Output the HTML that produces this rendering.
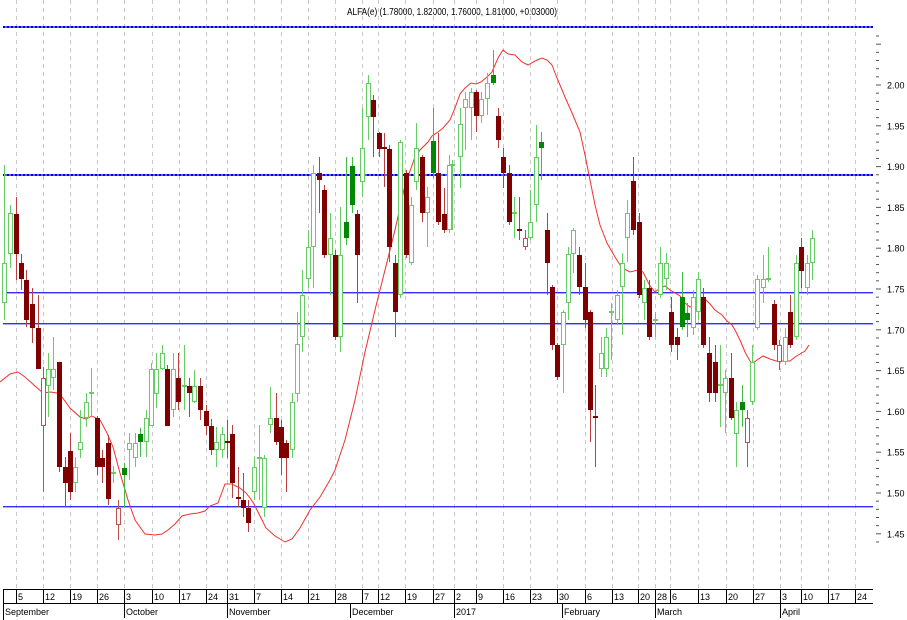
<!DOCTYPE html>
<html><head><meta charset="utf-8"><style>
html,body{margin:0;padding:0;background:#fff;width:907px;height:620px;overflow:hidden}
svg{display:block}
text{font-family:"Liberation Sans",sans-serif;fill:#000}
</style></head><body>
<svg id="s" width="907" height="620" xmlns="http://www.w3.org/2000/svg">
<text x="452" y="15" font-size="10" text-anchor="middle" textLength="210" lengthAdjust="spacingAndGlyphs">ALFA(e) (1.78000, 1.82000, 1.76000, 1.81000, +0.03000)</text>
<g id="grid"></g>
<g id="hl"></g>
<polyline id="ma" fill="none" stroke="#f03030" stroke-width="1"/>
<g id="cd"></g>
<g id="ax"></g>
</svg>
<script>
var NS="http://www.w3.org/2000/svg";
function el(p,t,a,txt){var e=document.createElementNS(NS,t);for(var k in a)e.setAttribute(k,a[k]);if(txt!=null)e.textContent=txt;p.appendChild(e);return e;}
var grid=document.getElementById('grid'),hl=document.getElementById('hl'),cd=document.getElementById('cd'),ax=document.getElementById('ax');
var gx=[16,43,70,97,124,152,179,206,227,254,281,308,335,362,378,405,433,454,476,503,530,557,585,612,638,655,670,698,726,753,780,801,828,855];
gx.forEach(function(x){el(grid,'line',{x1:x+.5,y1:0,x2:x+.5,y2:588,stroke:'#c8c8c8','stroke-dasharray':'4,4'});});
// horizontal lines
[27,175].forEach(function(y){
 el(hl,'rect',{x:3,y:y-1,width:870,height:2,fill:'#6060ff'});
 el(hl,'line',{x1:3,y1:y,x2:873,y2:y,stroke:'#0000e0','stroke-width':2,'stroke-dasharray':'2,2'});
});
[292,323,506].forEach(function(y){el(hl,'rect',{x:3,y:y,width:870,height:1.4,fill:'#3030ff'});});
// MA
var ma=[[0,382],[10,374],[18,372],[25,377],[35,386],[43,393],[50,392],[57,393],[62,397],[70,408],[80,417],[86,419],[92,416],[100,420],[107,433],[113,447],[120,473],[128,500],[135,520],[145,534],[155,535],[162,534],[168,530],[175,524],[182,516],[190,514],[198,513],[205,511],[210,506],[218,503],[225,484],[232,484],[240,488],[246,493],[250,498],[254,504],[260,516],[266,528],[275,536],[285,542],[292,539],[300,528],[310,510],[320,497],[330,480],[335,470],[345,440],[355,400],[365,352],[375,310],[385,270],[395,230],[405,185],[415,157],[420,150],[428,142],[432,136],[438,132],[443,128],[450,120],[455,108],[460,94],[465,88],[471,83],[476,84],[481,82],[487,77],[492,72],[498,58],[503,50],[508,54],[515,55],[522,62],[528,65],[535,61],[542,58],[547,60],[552,65],[557,78],[565,97],[572,113],[580,132],[585,155],[590,180],[595,205],[600,225],[607,243],[615,257],[622,268],[630,272],[638,270],[643,272],[647,280],[650,286],[655,292],[660,288],[665,286],[670,290],[680,296],[685,303],[690,307],[695,305],[700,302],[705,299],[710,304],[715,310],[722,315],[727,321],[732,325],[735,330],[740,340],[745,352],[750,361],[752,364],[757,360],[763,356],[770,359],[776,361],[785,361],[790,361],[795,357],[800,354],[805,351],[809,345]];
document.getElementById('ma').setAttribute('points',ma.map(function(p){return p.join(',')}).join(' '));
var C=[
[4,263,303,165,320,'g'],[10,213,254,205,268,'g'],[16,214,254,197,280,'r'],[21,263,279,254,290,'r'],[26,280,320,270,327,'r'],[32,304,328,288,343,'r'],[38,328,369,295,369,'r'],
[43,378,426,367,492,'p'],[48,369,386,353,417,'g'],[53,369,378,337,390,'g'],[59,362,467,362,472,'r'],[65,467,483,457,507,'r'],[70,451,492,433,500,'r'],[75,467,483,457,492,'g'],
[80,442,450,410,458,'g'],[86,402,418,393,427,'g'],[91,392,394,368,417,'g'],[97,418,467,416,475,'r'],[102,458,467,450,483,'r'],[108,443,499,435,505,'r'],[113,472,474,466,483,'g'],
[118,508,525,500,540,'p'],[124,468,475,463,507,'G'],[129,443,450,433,480,'g'],[135,443,458,433,467,'g'],[140,434,442,428,457,'G'],[146,418,442,410,457,'g'],[151,369,426,363,426,'g'],
[156,369,394,353,408,'g'],[162,353,369,345,370,'g'],[167,369,426,365,426,'r'],[173,369,410,353,417,'g'],[178,378,402,353,410,'r'],[184,385,387,345,410,'g'],[189,386,393,378,417,'r'],
[194,386,402,370,403,'g'],[200,386,410,378,420,'r'],[206,411,426,405,435,'r'],[211,426,450,419,455,'r'],[216,442,450,427,467,'g'],[222,434,450,427,458,'g'],[227,441,443,420,458,'r'],
[232,434,483,425,498,'r'],[238,497,499,467,507,'r'],[243,500,508,473,517,'r'],[248,508,523,500,532,'r'],[254,467,492,457,500,'g'],[259,457,459,425,500,'g'],[264,458,508,455,517,'g'],
[270,418,425,387,433,'g'],[276,418,442,393,445,'r'],[281,427,458,420,475,'r'],[286,443,458,440,492,'r'],[292,402,450,393,458,'g'],[297,344,394,312,402,'g'],[302,295,337,270,352,'g'],
[308,247,279,230,288,'g'],[313,173,247,165,288,'g'],[319,173,180,157,213,'r'],[324,190,255,185,258,'r'],[330,238,255,213,295,'g'],[335,255,337,250,340,'r'],[340,255,337,207,352,'g'],
[346,222,238,157,245,'G'],[352,166,205,157,213,'G'],[357,214,255,210,303,'r'],[362,148,182,108,197,'g'],[368,83,117,75,140,'g'],[373,100,117,95,157,'r'],[379,133,149,132,157,'r'],
[384,147,149,133,187,'r'],[389,149,247,145,262,'r'],[395,263,312,255,337,'r'],[400,142,295,140,298,'g'],[406,173,255,170,258,'r'],[411,205,263,197,265,'g'],[416,148,182,123,190,'g'],
[422,157,213,155,222,'r'],[427,197,213,187,247,'g'],[433,141,173,108,178,'G'],[438,173,222,133,225,'r'],[444,214,230,188,233,'r'],[449,165,230,155,233,'g'],
[452,164,166,160,230,'g'],[460,124,157,108,188,'g'],[465,99,108,92,150,'g'],[471,92,108,88,140,'g'],[476,92,116,90,132,'r'],[481,99,116,92,123,'g'],[487,83,99,73,115,'g'],
[493,75,83,50,85,'G'],[498,116,140,108,148,'r'],[503,157,173,148,188,'r'],[509,173,222,165,225,'r'],[514,212,214,197,238,'g'],[519,229,231,197,240,'r'],[525,238,247,230,250,'p'],
[530,222,238,190,240,'g'],[536,157,205,125,222,'g'],[541,142,148,132,180,'G'],[547,230,263,213,295,'r'],[552,287,345,285,350,'r'],[557,345,377,343,380,'r'],[563,312,345,310,393,'g'],
[568,254,303,247,320,'g'],[573,230,254,228,273,'g'],[579,255,287,247,295,'r'],[585,287,320,263,328,'r'],[590,312,410,310,442,'r'],[595,416,418,385,467,'r'],[601,353,369,337,377,'g'],
[606,337,369,328,377,'g'],[611,311,313,303,360,'g'],[617,295,320,290,325,'g'],[622,263,287,253,335,'g'],[627,213,238,200,262,'g'],[633,181,230,157,235,'r'],[639,222,295,213,298,'r'],
[644,288,303,280,320,'g'],[649,288,337,280,340,'r'],[655,319,321,312,337,'g'],[660,263,295,247,298,'g'],[666,263,279,253,290,'g'],[671,312,345,297,352,'r'],[677,337,345,328,360,'r'],
[682,297,327,272,330,'G'],[687,313,320,303,337,'G'],[693,297,328,290,335,'g'],[698,279,312,272,320,'g'],[703,297,345,288,348,'r'],[709,353,393,337,402,'r'],[715,362,393,345,402,'r'],
[720,384,386,345,427,'g'],[725,378,393,370,433,'g'],[731,378,418,353,420,'r'],[736,410,434,402,467,'g'],[742,402,410,385,427,'G'],[747,418,443,410,467,'p'],[752,362,402,345,405,'g'],
[757,279,328,275,330,'g'],[763,279,288,255,303,'g'],[768,278,280,247,282,'g'],[774,304,345,300,350,'r'],[779,345,362,340,370,'p'],[785,337,362,328,365,'g'],[790,312,345,295,348,'r'],
[796,263,337,255,340,'g'],[801,247,271,238,288,'r'],[807,263,288,255,295,'g'],[812,238,263,230,280,'g']
];
var col={g:['#66cc66','#66cc66',false],G:['#008800','#44bb44',true],r:['#800000','#b84040',true],p:['#c05050','#c05050',false]};
C.forEach(function(c){var x=c[0],t=c[5],k=col[t];
 el(cd,'line',{x1:x+.5,y1:c[3],x2:x+.5,y2:c[4],stroke:k[1],'stroke-width':1});
 var h=Math.max(c[2]-c[1],1);
 if(k[2]) el(cd,'rect',{x:x-2,y:c[1],width:5,height:h,fill:k[0]});
 else el(cd,'rect',{x:x-1.5,y:c[1]+.5,width:4,height:Math.max(h-1,0.5),fill:'#fff',stroke:k[0],'stroke-width':1});
});
for(var i=0;i<=62;i++){var p=2.06-i*0.01,y=85+(2.00-p)*816;if(y<20||y>588)continue;
 var major=Math.abs(Math.round(p*100)%5)==0;
 el(ax,'line',{x1:876,y1:y,x2:major?881:879,y2:y,stroke:'#555'});
 if(major&&p<=2.005&&p>=1.395) el(ax,'text',{x:887,y:y+3.5,'font-size':9},p.toFixed(2));
}
el(ax,'line',{x1:3,y1:589.5,x2:873,y2:589.5,stroke:'#000'});
el(ax,'line',{x1:3,y1:603.5,x2:873,y2:603.5,stroke:'#000'});
el(ax,'line',{x1:3.5,y1:589,x2:3.5,y2:620,stroke:'#000'});
var labs=['5','12','19','26','3','10','17','24','31','7','14','21','28','7','12','19','27','2','9','16','23','30','6','13','20','28','6','13','20','27','3','10','17','24'];
gx.forEach(function(x,i){el(ax,'line',{x1:x+.5,y1:590,x2:x+.5,y2:603,stroke:'#000'});el(ax,'text',{x:x+2,y:600,'font-size':9},labs[i]);});
[['September',3],['October',124],['November',227],['December',350],['2017',454],['February',562],['March',655],['April',780]].forEach(function(m){
 el(ax,'line',{x1:m[1]+.5,y1:603,x2:m[1]+.5,y2:618,stroke:'#000'});
 el(ax,'text',{x:m[1]+2,y:615,'font-size':9},m[0]);});
</script>
</body></html>
